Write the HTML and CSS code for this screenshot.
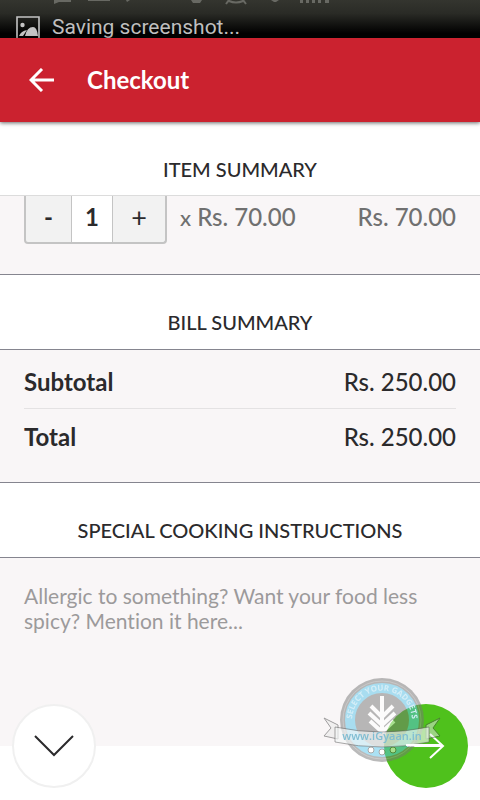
FILE: index.html
```html
<!DOCTYPE html>
<html lang="en">
<head>
<meta charset="utf-8">
<meta name="viewport" content="width=device-width, initial-scale=1">
<title>Checkout</title>
<link rel="stylesheet" href="styles.css">
</head>
<body>
<div class="status">
  <svg class="status-tray" viewBox="0 0 480 6" aria-hidden="true">
    <path d="M54 0h17v2h-12l-5 2zM88 0h22v1h-22zM126 0h4l-3 2zM191 0h11l-2 3h-7z"/>
    <path d="M229 0l-3 4M243 0l3 4M229 1q7 3 14 0" fill="none" stroke="#686963" stroke-width="2"/>
    <path d="M271 0h8l-3 2h-2zM300 0h3v3h-3zM306 0h3v3h-3zM312 0h3v3h-3zM318 0h3v3h-3zM325 0h4v3h-4z"/>
  </svg>
  <svg class="status-icon" viewBox="0 0 24 22" aria-hidden="true">
    <path d="M1 22V1h22v21" fill="none" stroke="#c4c4c4" stroke-width="1.6"/>
    <circle cx="6.500" cy="9" r="2.200"/>
    <path d="M3 20q2-5 8-6l-4 6zM9 20q2-9 8-9 4 0 5 9z"/>
  </svg>
  <span>Saving screenshot...</span>
</div>
<header class="bar">
  <button class="back" aria-label="Back">
    <svg viewBox="0 0 26 24" aria-hidden="true"><path d="M25 12H3M13 1 2 12l11 11"/></svg>
  </button>
  <h1>Checkout</h1>
</header>
<main>
  <section>
    <h2 class="first">ITEM SUMMARY</h2>
    <div class="item">
      <div class="stepper">
        <button class="minus" aria-label="Remove one">-</button>
        <output>1</output>
        <button class="plus" aria-label="Add one">+</button>
      </div>
      <span class="unit"><span class="times">x</span> Rs. 70.00</span>
      <span class="line-total">Rs. 70.00</span>
    </div>
  </section>
  <section>
    <h2>BILL SUMMARY</h2>
    <dl class="bill">
      <div class="bill-row"><dt>Subtotal</dt><dd>Rs. 250.00</dd></div>
      <div class="bill-row"><dt>Total</dt><dd>Rs. 250.00</dd></div>
    </dl>
  </section>
  <section>
    <h2><label for="notes">SPECIAL COOKING INSTRUCTIONS</label></h2>
    <textarea id="notes" placeholder="Allergic to something? Want your food less spicy? Mention it here..."></textarea>
  </section>
</main>
<nav class="actions">
  <button class="round collapse" aria-label="Collapse">
    <svg viewBox="0 0 40 22" aria-hidden="true"><path d="M1 1l19 19L39 1"/></svg>
  </button>
  <button class="round next" aria-label="Continue">
    <svg viewBox="0 0 38 26" aria-hidden="true"><path d="M0 13h36M23 1l13 12-13 12"/></svg>
  </button>
</nav>
<svg class="badge" viewBox="0 0 120 92" role="img" aria-label="www.iGyaan.in">
  <defs><path id="arc" d="M30.500 52A30 30 0 1 1 89.500 52"/></defs>
  <g opacity=".5">
    <circle cx="60" cy="46" r="42" fill="#777"/>
    <circle cx="60" cy="46" r="39" fill="none" stroke="#999" stroke-width="1"/>
    <circle cx="60" cy="46" r="32" fill="none" stroke="#59c4ea" stroke-width="10"/>
    <path d="M60 22v36M60 43L49 32M60 51L47 39M60 43l11-11M60 51l13-12M60 58L48 47M60 58l12-11" fill="none" stroke="#fff" stroke-width="4"/>
    <path d="M16 51L2 44l7 10-7 8 14 3zM104 51l14-7-7 10 7 8-14 3z" fill="#e8e8e8" stroke="#444"/>
    <g fill="#fff" stroke="#555"><circle cx="49" cy="76" r="3"/><circle cx="60" cy="78" r="3"/><circle cx="71" cy="76" r="3"/></g>
  </g>
  <text class="badge-arc"><textPath href="#arc" startOffset="50%">SELECT YOUR GADGETS</textPath></text>
  <path d="M13 53q47 10 94 0v15q-47 10-94 0z" fill="#f4f8f8" fill-opacity=".65" stroke="#555" stroke-opacity=".5"/>
  <text class="badge-name" x="60" y="66">www.iGyaan.in</text>
  <path d="M84 71h34" stroke="#fff" stroke-width="2"/>
</svg>
</body>
</html>
```
FILE: styles.css
```css
* { box-sizing: border-box; }
body {
  margin: 0;
  min-height: 100vh;
  background: #fff;
  color: #2b2a2c;
  font-family: Lato, "Open Sans", sans-serif;
  font-variant-ligatures: none;
}
button { padding: 0; border: 0; background: none; font: inherit; color: inherit; }
h1, h2, dl, dd { margin: 0; }
svg { display: block; }

.status {
  position: relative;
  display: flex;
  gap: 12px;
  height: 38px;
  padding: 16px 16px 0;
  overflow: hidden;
  background: linear-gradient(#34352f, #2a2b26 35%, #000 88%);
  color: #bfbfbf;
  font: 21px/22px Roboto, sans-serif;
}
.status-tray { position: absolute; top: 0; left: 0; width: 480px; fill: #686963; }
.status-icon { width: 24px; height: 22px; fill: #c4c4c4; }

.bar {
  position: relative;
  display: flex;
  align-items: center;
  gap: 32px;
  height: 84px;
  padding: 0 29px 1px;
  background: #cb222f;
  color: #fff;
  box-shadow: 0 1px 4px rgba(0, 0, 0, .6);
}
.back svg { width: 26px; height: 24px; fill: none; stroke: #fff; stroke-width: 3; }
h1 { font-size: 24px; line-height: 32px; font-weight: 700; }

h2 {
  height: 76px;
  padding-top: 32px;
  border-top: 1px solid #85858f;
  border-bottom: 1px solid #85858f;
  background: #fff;
  font-size: 20px;
  line-height: 30px;
  font-weight: 500;
  text-align: center;
}
h2.first { height: 74px; border-top: 0; border-bottom-color: #dcdcdc; }

.item {
  display: flex;
  align-items: flex-start;
  height: 78px;
  padding: 0 24px;
  background: #f9f6f7;
  color: #707070;
  font-size: 24px;
  line-height: 42px;
  font-weight: 500;
}
.stepper {
  display: flex;
  height: 48px;
  border: 2px solid #c4c4c4;
  border-top: 0;
  border-radius: 0 0 4px 4px;
  background: #f2f2f2;
  color: #2b2a2c;
  font-weight: 700;
  text-align: center;
}
.stepper button { height: 42px; }
.minus { width: 45px; }
.stepper output { width: 42px; border: 1px solid #c4c4c4; border-width: 0 1px; background: #fff; }
.plus { width: 52px; }
.stepper .plus { font-size: 27px; font-weight: 400; }
.unit { margin-left: 13px; }
.times { font-size: 22px; }
.line-total { margin-left: auto; }

.bill { padding: 4px 24px 19px; background: #f9f6f7; }
.bill-row {
  display: flex;
  justify-content: space-between;
  height: 54px;
  font-size: 24px;
  line-height: 55px;
}
.bill-row + .bill-row { height: 55px; border-top: 1px solid #e4e2e3; }
dt { font-weight: 700; }
dd { font-weight: 500; }

textarea {
  display: block;
  width: 100%;
  height: 188px;
  padding: 25px 24px;
  border: 0;
  resize: none;
  background: #f9f6f7;
  color: #2b2a2c;
  font: 21px/25px Lato, "Open Sans", sans-serif;
  font-variant-ligatures: none;
}
textarea::placeholder { color: #9c9a9b; }

.actions {
  position: fixed;
  right: 12px;
  bottom: 12px;
  left: 12px;
  display: flex;
  justify-content: space-between;
}
.round { display: grid; place-items: center; width: 84px; height: 84px; border-radius: 50%; }
.round svg { fill: none; stroke-width: 2; }
.collapse { border: 2px solid #f0f0f0; background: #fff; }
.collapse svg { width: 40px; height: 22px; stroke: #2b2a2c; }
.next { background: #4fc11c; }
.next svg { width: 38px; height: 26px; stroke: #fff; }

.badge { position: fixed; right: 38px; bottom: 34px; width: 120px; height: 92px; pointer-events: none; }
.badge-arc { fill: #d5eef7; font: 700 8px "Open Sans", sans-serif; text-anchor: middle; }
.badge-name { fill: #7fbdd2; font: 600 11px "Open Sans", sans-serif; text-anchor: middle; }
```
